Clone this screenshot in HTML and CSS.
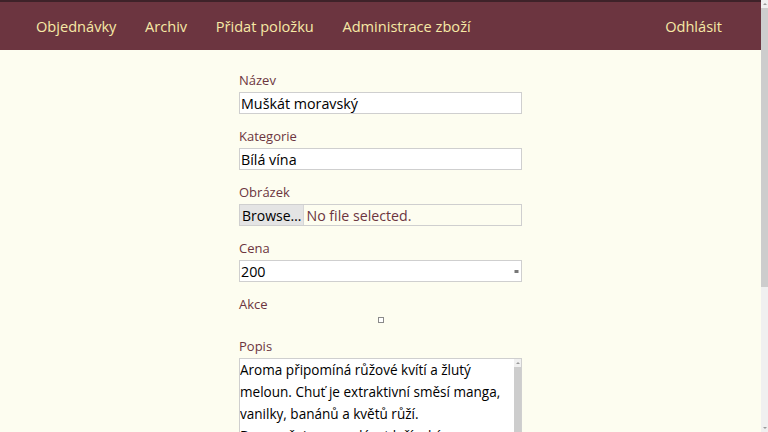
FILE: index.html
```html
<!DOCTYPE html>
<html lang="cs">
<head>
<meta charset="utf-8">
<title>Přidat položku</title>
<link rel="stylesheet" href="styles.css">
</head>
<body>
<div class="viewport">
  <div class="content">
    <nav class="nav">
      <a class="nav-link" href="#">Objednávky</a>
      <a class="nav-link" href="#">Archiv</a>
      <a class="nav-link" href="#">Přidat položku</a>
      <a class="nav-link" href="#">Administrace zboží</a>
      <a class="nav-link nav-right" href="#">Odhlásit</a>
    </nav>
    <main class="page">
      <form class="form">
        <div class="field">
          <label class="label">Název</label>
          <input class="input" type="text" value="Muškát moravský">
        </div>
        <div class="field">
          <label class="label">Kategorie</label>
          <input class="input" type="text" value="Bílá vína">
        </div>
        <div class="field">
          <label class="label">Obrázek</label>
          <div class="file">
            <button type="button" class="file-btn">Browse…</button>
            <span class="file-name">No file selected.</span>
          </div>
        </div>
        <div class="field">
          <label class="label">Cena</label>
          <div class="number">
            <input class="input number-input" type="text" value="200">
            <span class="spin"></span>
          </div>
        </div>
        <div class="field">
          <label class="label">Akce</label>
          <input class="check" type="checkbox">
        </div>
        <div class="field">
          <label class="label">Popis</label>
          <div class="area">
            <textarea class="textarea">Aroma připomíná růžové kvítí a žlutý meloun. Chuť je extraktivní směsí manga, vanilky, banánů a květů růží. Doporučujeme podávat k čínským pokrmům, kořeněným jídlům nebo jako aperitiv. Víno má jemnou sladkost a dlouhou dochuť.</textarea>
            <div class="sb sb-small">
              <span class="sb-up"></span>
              <span class="sb-thumb sb-thumb-area"></span>
              <span class="sb-track"></span>
            </div>
          </div>
        </div>
      </form>
    </main>
  </div>
  <div class="sb sb-page">
    <span class="sb-up"></span>
    <span class="sb-thumb sb-thumb-page"></span>
    <span class="sb-track"></span>
    <span class="sb-down"></span>
  </div>
</div>
</body>
</html>
```
FILE: styles.css
```css
html, body {
  margin: 0;
  background: #fdfdf0;
  font-family: "Open Sans", "Noto Sans", sans-serif;
}
.viewport {
  display: flex;
  height: 100vh;
  overflow: hidden;
}
.content {
  flex: 1;
  min-width: 0;
  overflow: hidden;
}
/* fake scrollbars */
.sb {
  display: flex;
  flex-direction: column;
  align-items: center;
  width: 7px;
  background: #f0f0f0;
  flex-shrink: 0;
}
.sb-up,
.sb-down {
  width: 0;
  height: 0;
  border-left: 2px solid transparent;
  border-right: 2px solid transparent;
  margin: 3px 0 3px;
}
.sb-up {
  border-bottom: 2px solid #9a9a9a;
}
.sb-down {
  border-top: 2px solid #9a9a9a;
}
.sb-thumb {
  width: 7px;
  background: #cdcdcd;
}
.sb-thumb-page {
  height: 279px;
}
.sb-track {
  flex: 1;
}
.sb-thumb-area {
  height: 160px;
}
.nav {
  display: flex;
  align-items: center;
  height: 48px;
  border-top: 2px solid #3e2229;
  background: #6c3540;
  padding: 0 39px 0 36px;
  gap: 28.6px;
}
.nav-link {
  color: #f6e9a6;
  text-decoration: none;
  font-size: 14.6px;
  line-height: 22px;
}
.nav-right {
  margin-left: auto;
}
.page {
  padding: 20px 0 100px;
}
.form {
  width: 283px;
  margin: 0 auto;
}
.field {
  display: flex;
  flex-direction: column;
  margin-bottom: 12px;
}
.label {
  color: #6c3540;
  font-size: 13px;
  line-height: 19px;
  padding-top: 1px;
  margin-bottom: 2px;
}
.input {
  box-sizing: border-box;
  height: 22px;
  width: 100%;
  margin: 0;
  padding: 0 1px;
  border: 1px solid #cfcfcf;
  background: #fff;
  font-family: "Open Sans", "Noto Sans", sans-serif;
  font-size: 14.3px;
  color: #000;
  outline: none;
}
.file {
  display: flex;
  align-items: center;
  box-sizing: border-box;
  height: 22px;
  border: 1px solid #cfcfcf;
}
.file-btn {
  height: 20px;
  margin: 0;
  padding: 0 2px 0 2px;
  border: none;
  border-right: 1px solid #d6d6d6;
  background: #e4e4e4;
  font-family: "Open Sans", "Noto Sans", sans-serif;
  font-size: 14px;
  color: #000;
}
.file-name {
  padding-left: 2px;
  font-size: 14.2px;
  color: #6c3540;
}
.number {
  display: flex;
  align-items: center;
  box-sizing: border-box;
  height: 22px;
  border: 1px solid #cfcfcf;
  background: #fff;
}
.number-input {
  flex: 1;
  height: 20px;
  border: none;
}
.spin {
  width: 3px;
  height: 3px;
  margin-right: 3px;
  background: #777;
  box-shadow: -1px 0 0 #bbb, 1px 0 0 #bbb;
}
.check {
  appearance: none;
  box-sizing: border-box;
  width: 6px;
  height: 6px;
  margin: 1px auto 1px;
  border: 1px solid #8a8a8a;
  background: #fff;
}
.area {
  display: flex;
  box-sizing: border-box;
  height: 176px;
  border: 1px solid #cfcfcf;
  background: #fff;
}
.textarea {
  flex: 1;
  min-width: 0;
  box-sizing: border-box;
  height: 100%;
  margin: 0;
  padding: 0;
  border: none;
  background: #fff;
  font-family: "Open Sans", "Noto Sans", sans-serif;
  font-size: 13.55px;
  line-height: 22px;
  color: #000;
  resize: none;
  overflow: hidden;
  outline: none;
}
```
